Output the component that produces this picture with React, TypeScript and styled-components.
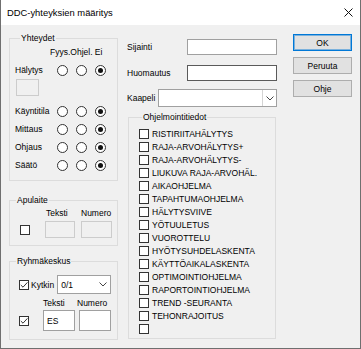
import React from "react";
import styled, { createGlobalStyle } from "styled-components";

const GlobalStyle = createGlobalStyle`
  html, body { margin: 0; padding: 0; background: #f0f0f0; }
  * { box-sizing: border-box; }
`;

const Window = styled.div`
  width: 361px;
  height: 349px;
  display: flex;
  flex-direction: column;
  border: 1px solid #6f6f6f;
  border-top: none;
  background: #f0f0f0;
  font-family: "Liberation Sans", Arial, sans-serif;
  font-size: 8.5px;
  color: #000;
  overflow: hidden;
`;

const TitleBar = styled.div`
  height: 25px;
  flex: none;
  background: #fff;
  display: flex;
  align-items: center;
  justify-content: space-between;
  padding: 0 7px 0 6px;
`;

const Title = styled.span`
  font-size: 9.4px;
  color: #000;
`;

const Body = styled.div`
  flex: 1;
  display: flex;
  align-items: flex-start;
  padding-left: 8px;
`;

const Column = styled.div<{ $w: number; $ml?: number; $mt?: number }>`
  width: ${(p) => p.$w}px;
  margin-left: ${(p) => p.$ml ?? 0}px;
  margin-top: ${(p) => p.$mt ?? 0}px;
  display: flex;
  flex-direction: column;
  flex: none;
`;

const Group = styled.fieldset<{ $pad: string; $mt?: number; $ml?: number; $w?: number }>`
  margin: ${(p) => p.$mt ?? 0}px 0 0 ${(p) => p.$ml ?? 0}px;
  padding: ${(p) => p.$pad};
  border: 1px solid #dcdcdc;
  min-width: 0;
  ${(p) => (p.$w ? `width: ${p.$w}px;` : "")}
`;

const Legend = styled.legend<{ $ml?: number }>`
  margin-left: ${(p) => p.$ml ?? 5}px;
  padding: 0 1px;
  line-height: 11px;
  font-size: 8.5px;
`;

const HeaderRow = styled.div`
  height: 10px;
  line-height: 10px;
  padding-left: 35px;
  white-space: nowrap;
`;

const RadioRow = styled.div<{ $mt?: number }>`
  display: flex;
  align-items: center;
  height: 12px;
  margin-top: ${(p) => p.$mt ?? 0}px;
`;

const RowLabel = styled.span<{ $w: number }>`
  width: ${(p) => p.$w}px;
  flex: none;
  white-space: nowrap;
`;

const RadioGroup = styled.div`
  display: flex;
  gap: 8px;
`;

const Radio = styled.span<{ $on?: boolean }>`
  width: 11px;
  height: 11px;
  border-radius: 50%;
  border: 1px solid #333;
  background: #fff;
  display: inline-flex;
  align-items: center;
  justify-content: center;
  &::after {
    content: "";
    width: 5px;
    height: 5px;
    border-radius: 50%;
    background: ${(p) => (p.$on ? "#111" : "transparent")};
  }
`;

const RadioStack = styled.div<{ $mt: number }>`
  display: flex;
  flex-direction: column;
  gap: 6px;
  margin-top: ${(p) => p.$mt}px;
`;

const TextBox = styled.div<{
  $w: number;
  $h: number;
  $kind?: "normal" | "focus" | "disabled";
  $mt?: number;
  $ml?: number;
}>`
  width: ${(p) => p.$w}px;
  height: ${(p) => p.$h}px;
  flex: none;
  margin-top: ${(p) => p.$mt ?? 0}px;
  margin-left: ${(p) => p.$ml ?? 0}px;
  background: ${(p) => (p.$kind === "disabled" ? "#f0f0f0" : "#fff")};
  border: 1px solid
    ${(p) =>
      p.$kind === "disabled" ? "#cccccc" : p.$kind === "focus" ? "#5a5a5a" : "#a0a0a0"};
  display: flex;
  align-items: center;
  padding-left: 3px;
  line-height: 10px;
`;

const CheckBoxBox = styled.span<{ $ml?: number }>`
  width: 10px;
  height: 10px;
  flex: none;
  margin-left: ${(p) => p.$ml ?? 0}px;
  border: 1px solid #333;
  background: #fff;
  display: inline-flex;
  align-items: center;
  justify-content: center;
`;

const CheckBox = ({ checked, ml }: { checked?: boolean; ml?: number }) => (
  <CheckBoxBox $ml={ml}>
    {checked && (
      <svg width="8" height="8" viewBox="0 0 8 8">
        <polyline points="0.8,4 3,6.2 7.4,1.4" fill="none" stroke="#333" strokeWidth="1" />
      </svg>
    )}
  </CheckBoxBox>
);

const BoxGrid = styled.div<{ $cols: string; $gap: number; $mt?: number }>`
  display: grid;
  grid-template-columns: ${(p) => p.$cols};
  column-gap: ${(p) => p.$gap}px;
  align-items: center;
  margin-top: ${(p) => p.$mt ?? 0}px;
`;

const ColLabel = styled.span<{ $pl?: number }>`
  height: 10px;
  line-height: 10px;
  padding-left: ${(p) => p.$pl ?? 0}px;
  white-space: nowrap;
`;

const FlexRow = styled.div<{ $h: number; $mt?: number }>`
  display: flex;
  align-items: center;
  height: ${(p) => p.$h}px;
  margin-top: ${(p) => p.$mt ?? 0}px;
`;

const InlineLabel = styled.span<{ $ml?: number; $w?: number }>`
  margin-left: ${(p) => p.$ml ?? 0}px;
  ${(p) => (p.$w ? `width: ${p.$w}px; flex: none;` : "")}
  white-space: nowrap;
`;

const Combo = styled.div<{ $w: number; $h: number; $ml?: number }>`
  width: ${(p) => p.$w}px;
  height: ${(p) => p.$h}px;
  margin-left: ${(p) => p.$ml ?? 0}px;
  flex: none;
  background: #fff;
  border: 1px solid #a0a0a0;
  display: flex;
  align-items: stretch;
`;

const ComboText = styled.span`
  flex: 1;
  display: flex;
  align-items: center;
  padding-left: 3px;
`;

const ComboArrow = styled.span<{ $sep?: boolean; $w: number }>`
  width: ${(p) => p.$w}px;
  flex: none;
  display: flex;
  align-items: center;
  justify-content: center;
  border-left: ${(p) => (p.$sep ? "1px solid #d4d4d4" : "none")};
`;

const Chevron = () => (
  <svg width="8" height="5" viewBox="0 0 8 5">
    <polyline points="0.5,0.5 4,4 7.5,0.5" fill="none" stroke="#444" strokeWidth="1" />
  </svg>
);

const CheckList = styled.div`
  display: flex;
  flex-direction: column;
`;

const CheckItem = styled.div`
  height: 13px;
  display: flex;
  align-items: center;
  gap: 3px;
  white-space: nowrap;
`;

const Button = styled.div<{ $default?: boolean }>`
  height: 17px;
  display: flex;
  align-items: center;
  justify-content: center;
  background: #e1e1e1;
  border: 1px solid ${(p) => (p.$default ? "#0078d7" : "#adadad")};
  box-shadow: ${(p) => (p.$default ? "inset 0 0 0 1px rgba(0,120,215,0.45)" : "none")};
`;

const ButtonStack = styled.div`
  display: flex;
  flex-direction: column;
  gap: 6px;
`;

const programItems = [
  "RISTIRIITAHÄLYTYS",
  "RAJA-ARVOHÄLYTYS+",
  "RAJA-ARVOHÄLYTYS-",
  "LIUKUVA RAJA-ARVOHÄL.",
  "AIKAOHJELMA",
  "TAPAHTUMAOHJELMA",
  "HÄLYTYSVIIVE",
  "YÖTUULETUS",
  "VUOROTTELU",
  "HYÖTYSUHDELASKENTA",
  "KÄYTTÖAIKALASKENTA",
  "OPTIMOINTIOHJELMA",
  "RAPORTOINTIOHJELMA",
  "TREND -SEURANTA",
  "TEHONRAJOITUS",
  "",
];

const Radios = () => (
  <RadioGroup>
    <Radio />
    <Radio />
    <Radio $on />
  </RadioGroup>
);

export default function App() {
  return (
    <>
      <GlobalStyle />
      <Window>
        <TitleBar>
          <Title>DDC-yhteyksien määritys</Title>
          <svg width="9" height="9" viewBox="0 0 9 9">
            <path d="M0.5 0.5 L8.5 8.5 M8.5 0.5 L0.5 8.5" stroke="#111" strokeWidth="1" />
          </svg>
        </TitleBar>
        <Body>
          <Column $w={109} $mt={8}>
            <Group $pad="3px 0 9px 5px">
              <Legend>Yhteydet</Legend>
              <HeaderRow>Fyys.Ohjel. Ei</HeaderRow>
              <RadioRow $mt={7}>
                <RowLabel $w={42}>Hälytys</RowLabel>
                <Radios />
              </RadioRow>
              <TextBox $w={23} $h={17} $kind="disabled" $mt={3} $ml={1} />
              <RadioStack $mt={9}>
                {["Käyntitila", "Mittaus", "Ohjaus", "Säätö"].map((l) => (
                  <RadioRow key={l}>
                    <RowLabel $w={42}>{l}</RowLabel>
                    <Radios />
                  </RadioRow>
                ))}
              </RadioStack>
            </Group>

            <Group $pad="2px 0 7px 0" $mt={14}>
              <Legend $ml={6}>Apulaite</Legend>
              <BoxGrid $cols="29px 30px 31px" $gap={6}>
                <span />
                <ColLabel $pl={1}>Teksti</ColLabel>
                <ColLabel>Numero</ColLabel>
              </BoxGrid>
              <BoxGrid $cols="29px 30px 31px" $gap={6} $mt={3}>
                <CheckBox ml={10} />
                <TextBox $w={30} $h={17} $kind="disabled" />
                <TextBox $w={31} $h={17} $kind="disabled" />
              </BoxGrid>
            </Group>

            <Group $pad="8px 0 8px 0" $mt={10}>
              <Legend $ml={6}>Ryhmäkeskus</Legend>
              <FlexRow $h={19}>
                <CheckBox checked ml={9} />
                <InlineLabel $ml={2}>Kytkin</InlineLabel>
                <Combo $w={54} $h={19} $ml={3}>
                  <ComboText>0/1</ComboText>
                  <ComboArrow $w={14}>
                    <Chevron />
                  </ComboArrow>
                </Combo>
              </FlexRow>
              <BoxGrid $cols="29px 34px 32px" $gap={2} $mt={4}>
                <span />
                <ColLabel $pl={2}>Teksti</ColLabel>
                <ColLabel>Numero</ColLabel>
              </BoxGrid>
              <BoxGrid $cols="29px 32px 32px" $gap={4} $mt={2}>
                <CheckBox checked ml={9} />
                <TextBox $w={32} $h={21}>ES</TextBox>
                <TextBox $w={32} $h={21} />
              </BoxGrid>
            </Group>
          </Column>

          <Column $w={150} $ml={9} $mt={14}>
            <FlexRow $h={16}>
              <InlineLabel $w={60}>Sijainti</InlineLabel>
              <TextBox $w={90} $h={16} />
            </FlexRow>
            <FlexRow $h={16} $mt={10}>
              <InlineLabel $w={60}>Huomautus</InlineLabel>
              <TextBox $w={90} $h={16} $kind="focus" />
            </FlexRow>
            <FlexRow $h={18} $mt={8}>
              <InlineLabel $w={31}>Kaapeli</InlineLabel>
              <Combo $w={119} $h={18}>
                <ComboText />
                <ComboArrow $w={14} $sep>
                  <Chevron />
                </ComboArrow>
              </Combo>
            </FlexRow>
            <Group $pad="4px 0 3px 10px" $mt={5} $ml={1} $w={148}>
              <Legend $ml={3}>Ohjelmointitiedot</Legend>
              <CheckList>
                {programItems.map((t, i) => (
                  <CheckItem key={i}>
                    <CheckBox />
                    {t && <span>{t}</span>}
                  </CheckItem>
                ))}
              </CheckList>
            </Group>
          </Column>

          <Column $w={59} $ml={16} $mt={9}>
            <ButtonStack>
              <Button $default>OK</Button>
              <Button>Peruuta</Button>
              <Button>Ohje</Button>
            </ButtonStack>
          </Column>
        </Body>
      </Window>
    </>
  );
}
